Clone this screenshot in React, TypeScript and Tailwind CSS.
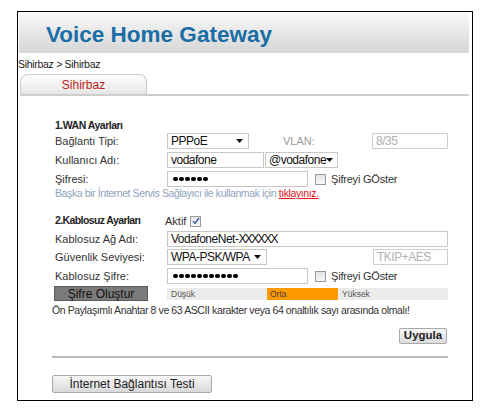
const font = { fontFamily: '"Liberation Sans", Arial, sans-serif' };

function Arrow() {
  return (
    <svg width="7" height="4" viewBox="0 0 7 4" className="shrink-0">
      <path d="M0 0h7L3.5 4z" fill="#111" />
    </svg>
  );
}

function Select({ text, w }: { text: string; w: string }) {
  return (
    <div className={`${w} h-full flex items-center justify-between bg-white border border-[#c8c8c8] pl-[3px] pr-[5px] text-[12px] tracking-[-0.5px] text-[#111] whitespace-nowrap overflow-hidden`}>
      <span>{text}</span>
      <Arrow />
    </div>
  );
}

function Box({ w, children, muted }: { w: string; children?: React.ReactNode; muted?: boolean }) {
  return (
    <div
      className={`${w} h-full flex items-center bg-white border pl-[3px] text-[12px] tracking-[-0.5px] whitespace-nowrap overflow-hidden ${
        muted ? 'border-[#cfcfcf] text-[#b0b0b0]' : 'border-[#c8c8c8] text-[#111]'
      }`}
    >
      {children}
    </div>
  );
}

function Dots({ n }: { n: number }) {
  return (
    <div className="flex gap-[1.5px] pl-[2px]">
      {Array.from({ length: n }).map((_, i) => (
        <div key={i} className="w-[4.5px] h-[4.5px] rounded-full bg-black" />
      ))}
    </div>
  );
}

function Check({ checked }: { checked?: boolean }) {
  return (
    <div className="w-[11px] h-[11px] border border-[#9a9a9a] bg-gradient-to-b from-[#e4e4e4] to-[#f8f8f8] flex items-center justify-center">
      {checked && (
        <svg width="8" height="8" viewBox="0 0 8 8">
          <path d="M1 4.2l2 2.2L7 1" stroke="#3a5fb0" strokeWidth="1.4" fill="none" />
        </svg>
      )}
    </div>
  );
}

function ShowPass() {
  return (
    <div className="flex items-center ml-[7px] gap-[5px]">
      <Check />
      <span className="text-[11px] text-[#333] tracking-[-0.2px]">Şifreyi GÖster</span>
    </div>
  );
}

function Label({ children }: { children: React.ReactNode }) {
  return <div className="w-[115px] pl-[3px] shrink-0 text-[11px] text-[#333] whitespace-nowrap">{children}</div>;
}

export default function App() {
  return (
    <div className="w-[482px] h-[409px] bg-white pl-[17px] pt-[11px]" style={font}>
      <div className="w-[456px] h-[390px] border border-black flex flex-col">
        <div className="ml-[1px] mt-[1px] w-[450px] h-[40px] rounded-tl-[6px] bg-gradient-to-b from-[#f8f8f8] to-[#d6d6d6] flex items-center pl-[27px]">
          <span className="text-[22.5px] font-bold text-[#1a6ea5] leading-none mt-[5px]">Voice Home Gateway</span>
        </div>
        <div className="mt-[5px] h-[12px] leading-[12px] text-[10.5px] text-[#222] tracking-[-0.3px]">Sihirbaz &gt; Sihirbaz</div>
        <div className="mt-[4px] ml-[2px] w-[127px] h-[20px] rounded-t-[8px] border border-b-0 border-[#cfcfcf] bg-gradient-to-b from-white to-[#e6e6e6] flex items-center justify-center text-[12px] text-[#c41a1a]">
          Sihirbaz
        </div>
        <div className="ml-[2px] w-[449px] h-[2px] bg-[#cdcdcd]" />

        <div className="pl-[34px] flex flex-col">
          <div className="mt-[23px] h-[14px] flex items-center pl-[3px] text-[10.5px] font-bold tracking-[-0.5px] text-[#222]">1.WAN Ayarları</div>
          <div className="h-[16px] flex items-center">
            <Label>Bağlantı Tipi:</Label>
            <Select text="PPPoE" w="w-[82px]" />
            <div className="ml-[34px] w-[89px] text-[11px] text-[#999]">VLAN:</div>
            <Box w="w-[76px]" muted>
              8/35
            </Box>
          </div>
          <div className="mt-[3px] h-[16px] flex items-center">
            <Label>Kullanıcı Adı:</Label>
            <Box w="w-[97px]">vodafone</Box>
            <div className="ml-[1px] h-full">
              <Select text="@vodafone" w="w-[73px]" />
            </div>
          </div>
          <div className="mt-[3px] h-[16px] flex items-center">
            <Label>Şifresi:</Label>
            <Box w="w-[141px]">
              <Dots n={6} />
            </Box>
            <ShowPass />
          </div>
          <div className="h-[14px] flex items-center pl-[3px] text-[10.5px] tracking-[-0.4px] text-[#8ea3bb] whitespace-nowrap">
            Başka bir İnternet Servis Sağlayıcı ile kullanmak için&nbsp;
            <span className="text-[#e8101a] underline">tıklayınız.</span>
          </div>

          <div className="mt-[12px] h-[16px] flex items-center">
            <div className="w-[113px] pl-[3px] shrink-0 text-[10.5px] font-bold tracking-[-0.6px] text-[#222] whitespace-nowrap">2.Kablosuz Ayarları</div>
            <span className="text-[11px] text-[#333] mr-[4px]">Aktif</span>
            <Check checked />
          </div>
          <div className="mt-[2px] h-[16px] flex items-center">
            <Label>Kablosuz Ağ Adı:</Label>
            <Box w="w-[281px]">
              VodafoneNet-<span className="tracking-[-1.6px]">XXXXXX</span>
            </Box>
          </div>
          <div className="mt-[2px] h-[16px] flex items-center">
            <Label>Güvenlik Seviyesi:</Label>
            <Select text="WPA-PSK/WPA" w="w-[100px]" />
            <div className="ml-[106px] h-full">
              <Box w="w-[75px]" muted>
                TKIP+AES
              </Box>
            </div>
          </div>
          <div className="mt-[3px] h-[16px] flex items-center">
            <Label>Kablosuz Şifre:</Label>
            <Box w="w-[141px]">
              <Dots n={11} />
            </Box>
            <ShowPass />
          </div>
          <div className="mt-[2px] h-[15px] flex items-center">
            <div className="w-[115px] shrink-0 pl-[2px]">
              <div className="w-[94px] h-[15px] bg-[#7b7b7b] border border-[#5c5c5c] flex items-center justify-center text-[12px] text-[#111]">
                Şifre Oluştur
              </div>
            </div>
            <div className="flex h-[12px] text-[8.5px] leading-[12px]">
              <div className="w-[100px] bg-[#ececec] pl-[4px] text-[#555]">Düşük</div>
              <div className="w-[71px] bg-[#ff9900] pl-[3px] text-[#444]">Orta</div>
              <div className="w-[110px] bg-[#ececec] pl-[4px] text-[#555]">Yüksek</div>
            </div>
          </div>
          <div className="mt-[3px] h-[14px] flex items-center text-[10.5px] tracking-[-0.4px] text-[#333] whitespace-nowrap">
            Ön Paylaşımlı Anahtar 8 ve 63 ASCII karakter veya 64 onaltılık sayı arasında olmalı!
          </div>
          <div className="mt-[10px] h-[16px] flex justify-end pr-[25px]">
            <div className="w-[48px] h-[16px] rounded-[2px] border border-[#a9a9a9] bg-gradient-to-b from-[#f7f7f7] to-[#dcdcdc] flex items-center justify-center text-[11.5px] font-bold text-[#222]">
              Uygula
            </div>
          </div>
          <div className="mt-[12px] w-[396px] h-[2px] bg-[#b9b9b9]" />
          <div className="mt-[17px] w-[160px] h-[18px] rounded-[2px] border border-[#a9a9a9] bg-gradient-to-b from-[#f7f7f7] to-[#d9d9d9] flex items-center justify-center text-[12px] text-[#222]">
            İnternet Bağlantısı Testi
          </div>
        </div>
      </div>
    </div>
  );
}
